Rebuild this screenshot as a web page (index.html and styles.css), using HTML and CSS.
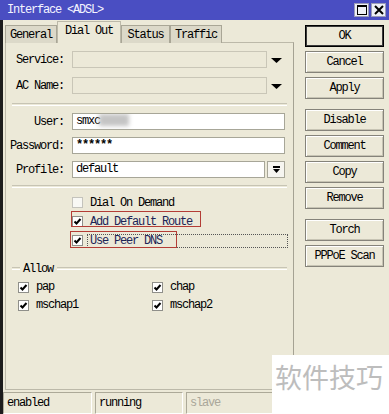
FILE: index.html
```html
<!DOCTYPE html>
<html lang="en">
<head>
    <meta charset="UTF-8">
    <title>Interface &lt;ADSL&gt;</title>
    <link rel="stylesheet" href="styles.css">
</head>
<body>
<div class="window">

    <div class="titlebar">
        <span class="title">Interface &lt;ADSL&gt;</span>
        <div class="tb-buttons">
            <span class="tb-btn">
                <svg width="10" height="10" viewBox="0 0 10 10"><rect x="0.5" y="0.5" width="9" height="9" fill="none" stroke="#000"/><rect x="0" y="0" width="10" height="2" fill="#000"/></svg>
            </span>
            <span class="tb-btn">
                <svg width="10" height="10" viewBox="0 0 10 10"><path d="M1 1 L9 9 M9 1 L1 9" stroke="#000" stroke-width="2"/></svg>
            </span>
        </div>
    </div>

    <div class="client">
        <div class="main">
            <div class="left">
                <div class="tabs">
                    <span class="tab tab-general">General</span>
                    <span class="tab tab-dial active">Dial Out</span>
                    <span class="tab tab-status">Status</span>
                    <span class="tab tab-traffic">Traffic</span>
                </div>

                <div class="panel">
                    <div class="rows rows-top">
                        <div class="field-row">
                            <label class="lbl">Service:</label>
                            <span class="field disabled wide"></span>
                            <span class="drop"><svg width="11" height="5" viewBox="0 0 11 5"><path d="M0 0 H11 L5.5 5 Z" fill="#000"/></svg></span>
                        </div>
                        <div class="field-row">
                            <label class="lbl">AC Name:</label>
                            <span class="field disabled wide"></span>
                            <span class="drop"><svg width="11" height="5" viewBox="0 0 11 5"><path d="M0 0 H11 L5.5 5 Z" fill="#000"/></svg></span>
                        </div>
                    </div>

                    <div class="sep sep-1"></div>

                    <div class="rows rows-login">
                        <div class="field-row">
                            <label class="lbl">User:</label>
                            <span class="field full">smxc<span class="blur"></span></span>
                        </div>
                        <div class="field-row">
                            <label class="lbl">Password:</label>
                            <span class="field full pass">******</span>
                        </div>
                        <div class="field-row">
                            <label class="lbl">Profile:</label>
                            <span class="field profile">default</span>
                            <span class="pick"><svg width="9" height="9" viewBox="0 0 9 9"><rect x="1" y="1" width="7" height="2" fill="#000"/><path d="M1 4 H8 L4.5 8 Z" fill="#000"/></svg></span>
                        </div>
                    </div>

                    <div class="sep sep-2"></div>

                    <div class="checks">
                        <div class="check-row">
                            <span class="cb empty"></span>
                            <span class="cb-text">Dial On Demand</span>
                        </div>
                        <div class="check-row">
                            <span class="mark mark-route">
                                <span class="cb"><svg width="9" height="9" viewBox="0 0 9 9"><path d="M1.5 4.5 L3.5 6.5 L7.5 2" fill="none" stroke="#000" stroke-width="2"/></svg></span>
                                <span class="cb-text navy">Add Default Route</span>
                            </span>
                        </div>
                        <div class="check-row">
                            <span class="mark mark-dns">
                                <span class="cb"><svg width="9" height="9" viewBox="0 0 9 9"><path d="M1.5 4.5 L3.5 6.5 L7.5 2" fill="none" stroke="#000" stroke-width="2"/></svg></span>
                                <span class="cb-text navy focus">Use Peer DNS</span>
                            </span>
                        </div>
                    </div>

                    <div class="group-title"><span>Allow</span></div>

                    <div class="allow">
                        <div class="check-row small">
                            <span class="cb"><svg width="9" height="9" viewBox="0 0 9 9"><path d="M1.5 4.5 L3.5 6.5 L7.5 2" fill="none" stroke="#000" stroke-width="2"/></svg></span>
                            <span class="cb-text">pap</span>
                        </div>
                        <div class="check-row small">
                            <span class="cb"><svg width="9" height="9" viewBox="0 0 9 9"><path d="M1.5 4.5 L3.5 6.5 L7.5 2" fill="none" stroke="#000" stroke-width="2"/></svg></span>
                            <span class="cb-text">chap</span>
                        </div>
                        <div class="check-row small">
                            <span class="cb"><svg width="9" height="9" viewBox="0 0 9 9"><path d="M1.5 4.5 L3.5 6.5 L7.5 2" fill="none" stroke="#000" stroke-width="2"/></svg></span>
                            <span class="cb-text">mschap1</span>
                        </div>
                        <div class="check-row small">
                            <span class="cb"><svg width="9" height="9" viewBox="0 0 9 9"><path d="M1.5 4.5 L3.5 6.5 L7.5 2" fill="none" stroke="#000" stroke-width="2"/></svg></span>
                            <span class="cb-text">mschap2</span>
                        </div>
                    </div>
                </div>
            </div>

            <div class="actions">
                <div class="btn-group">
                    <button class="btn default">OK</button>
                    <button class="btn">Cancel</button>
                    <button class="btn">Apply</button>
                </div>
                <div class="btn-group">
                    <button class="btn">Disable</button>
                    <button class="btn">Comment</button>
                    <button class="btn">Copy</button>
                    <button class="btn">Remove</button>
                </div>
                <div class="btn-group">
                    <button class="btn">Torch</button>
                    <button class="btn">PPPoE Scan</button>
                </div>
            </div>
        </div>

        <div class="statusbar">
            <span class="status s-1">enabled</span>
            <span class="status s-2">running</span>
            <span class="status s-3 grey">slave</span>
        </div>
    </div>

    <div class="watermark">软件技巧</div>
</div>
</body>
</html>
```

FILE: styles.css
```css
body {
    margin: 0;
    background-color: #ece9d8;
    color: #000;
    font-family: "Liberation Mono", "DejaVu Sans Mono", monospace;
    font-size: 12px;
    letter-spacing: -1.2px;
}

.window {
    position: relative;
    width: 389px;
    height: 414px;
    overflow: hidden;
    display: flex;
    flex-direction: column;
}

/* title bar */

.titlebar {
    flex: none;
    height: 20px;
    background-color: #4a4ec2;
    color: #f4f4ff;
    display: flex;
    align-items: center;
    justify-content: space-between;
    padding: 0 3px 0 7px;
}

.tb-buttons {
    display: flex;
    gap: 2px;
}

.tb-btn {
    width: 15px;
    height: 14px;
    box-sizing: border-box;
    background-color: #eef0f6;
    border: 1px solid #9a9cb8;
    display: flex;
    align-items: center;
    justify-content: center;
}

/* client area */

.client {
    flex: 1;
    display: flex;
    flex-direction: column;
    border-left: 3px solid #1c1c1c;
}

.main {
    flex: 1;
    display: flex;
}

.left {
    width: 289px;
    padding: 2px 0 2px 2px;
    display: flex;
    flex-direction: column;
}

.tabs {
    display: flex;
    align-items: flex-end;
    height: 21px;
    margin-bottom: -1px;
    position: relative;
    z-index: 1;
}

.tab {
    box-sizing: border-box;
    height: 18px;
    line-height: 18px;
    text-align: center;
    background-color: #dcd9c9;
    border: 1px solid #a9a696;
    border-bottom: none;
}

    .tab.active {
        height: 22px;
        line-height: 18px;
        background-color: #ece9d8;
        border-color: #bcb9a9;
    }

.tab-general { width: 52px; }
.tab-dial { width: 64px; }
.tab-status { width: 49px; }
.tab-traffic { width: 52px; }

.panel {
    flex: 1;
    box-sizing: border-box;
    border: 1px solid #bcb9a9;
    border-right-color: #a5a293;
    padding-top: 8px;
}

/* form rows */

.rows {
    display: flex;
    flex-direction: column;
}

.rows-top { gap: 9px; }
.rows-login { gap: 7px; }

.field-row {
    display: flex;
    align-items: center;
    height: 17px;
}

.lbl {
    width: 58px;
    margin-right: 8px;
    text-align: right;
}

.field {
    box-sizing: border-box;
    height: 17px;
    line-height: 15px;
    padding-left: 3px;
    border: 1px solid #a7a698;
    background-color: #fff;
    white-space: nowrap;
    overflow: hidden;
}

    .field.disabled {
        background-color: #ece9d8;
        border-color: #c9c6b7;
    }

    .field.wide { width: 195px; }
    .field.full { width: 213px; }
    .field.profile { width: 193px; }

    .field.pass {
        font-weight: bold;
    }

.blur {
    display: inline-block;
    width: 30px;
    height: 12px;
    margin-left: -1px;
    vertical-align: -2px;
    background-color: #c4c4c4;
    filter: blur(2px);
}

.drop {
    width: 18px;
    display: flex;
    justify-content: center;
    padding-top: 1px;
}

.pick {
    box-sizing: border-box;
    width: 18px;
    height: 17px;
    margin-left: 2px;
    border: 1px solid #a7a698;
    background-color: #f6f5f0;
    display: flex;
    align-items: center;
    justify-content: center;
}

.sep {
    height: 1px;
    margin: 0 6px;
    border-top: 1px solid #c7c4b4;
    border-bottom: 1px solid #fff;
}

.sep-1 { margin-top: 9px; margin-bottom: 7px; }
.sep-2 { margin-top: 7px; margin-bottom: 5px; }

/* check boxes */

.checks {
    padding-left: 66px;
}

.check-row {
    display: flex;
    align-items: center;
    height: 19px;
}

.cb {
    flex: none;
    box-sizing: border-box;
    width: 11px;
    height: 11px;
    border: 1px solid #8f8f8a;
    background-color: #fff;
    display: flex;
    align-items: center;
    justify-content: center;
}

    .cb.empty {
        border-color: #c4c3bc;
        background-color: #f8f8f4;
    }

.cb-text {
    margin-left: 7px;
    white-space: nowrap;
}

.navy {
    color: #1d2456;
}

.mark {
    position: relative;
    display: flex;
    align-items: center;
}

    .mark::after {
        content: "";
        position: absolute;
        border: 1px solid #b33d36;
        top: -4px;
    }

.mark-route::after {
    left: -1px;
    width: 128px;
    height: 14px;
}

.mark-dns {
    flex: 1;
    margin-right: 6px;
}

    .mark-dns::after {
        left: -2px;
        width: 105px;
        height: 15px;
    }

.focus {
    flex: 1;
    margin-left: 5px;
    padding-left: 2px;
    line-height: 12px;
    outline: 1px dotted #555;
}

.group-title {
    display: flex;
    align-items: center;
    height: 13px;
    margin: 12px 6px 0 6px;
}

    .group-title::before,
    .group-title::after {
        content: "";
        height: 1px;
        border-top: 1px solid #c7c4b4;
        border-bottom: 1px solid #fff;
    }

    .group-title::before {
        width: 8px;
    }

    .group-title::after {
        flex: 1;
    }

    .group-title span {
        margin: 0 4px 0 3px;
    }

.allow {
    display: grid;
    grid-template-columns: 134px 134px;
    padding-left: 12px;
    margin-top: 3px;
}

    .allow .check-row {
        height: 18px;
    }

/* buttons on the right */

.actions {
    width: 79px;
    margin-left: 11px;
    padding-top: 5px;
    display: flex;
    flex-direction: column;
    gap: 10px;
}

.btn-group {
    display: flex;
    flex-direction: column;
    gap: 4px;
}

.btn {
    height: 22px;
    padding: 0;
    font-family: inherit;
    font-size: 12px;
    letter-spacing: -1.2px;
    color: #000;
    background-color: #ece9d8;
    border: 1px solid #85837a;
    box-shadow: inset 1px 1px #fff, inset -1px -1px #c7c4b4;
}

    .btn.default {
        border-color: #000;
        box-shadow: inset 0 0 0 1px #3a3a3a;
    }

/* status bar */

.statusbar {
    flex: none;
    height: 22px;
    display: flex;
    gap: 3px;
}

.status {
    box-sizing: border-box;
    height: 22px;
    line-height: 21px;
    padding-left: 3px;
    border: 1px solid #fff;
    border-top-color: #aca998;
    border-left-color: #aca998;
}

.s-1 { width: 89px; }
.s-2 { width: 88px; }
.s-3 { width: 90px; }

.grey {
    color: #aaa79a;
}

.watermark {
    position: absolute;
    right: 0;
    bottom: 0;
    width: 117px;
    height: 59px;
    box-sizing: border-box;
    padding: 5px 0 0 3px;
    background-color: #fff;
    color: #bdbdbd;
    font-family: "Noto Sans CJK SC", sans-serif;
    font-size: 27px;
    letter-spacing: 0;
    line-height: 34px;
}
```
